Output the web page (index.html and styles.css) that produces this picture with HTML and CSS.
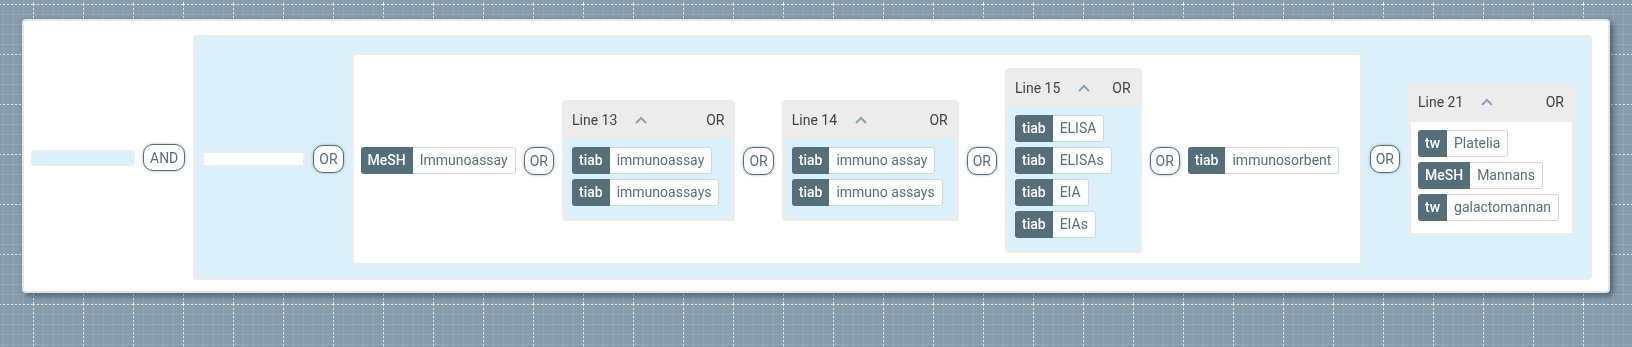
FILE: index.html
```html
<!DOCTYPE html>
<html lang="en">
<head>
    <meta charset="UTF-8">
    <meta name="viewport" content="width=device-width, initial-scale=1.0">
    <title>Search Builder</title>
    <link rel="stylesheet" href="styles.css">
</head>
<body>
    <!-- blueprint grid behind the builder -->
    <svg class="grid-bg" width="100%" height="100%">
        <defs>
            <pattern id="minor" x="3" y="4" width="10" height="10" patternUnits="userSpaceOnUse">
                <path d="M0 0.5 H10 M0.5 0 V10" stroke="rgba(255,255,255,0.1)" stroke-width="1" fill="none"/>
            </pattern>
            <pattern id="major" x="33" y="4" width="50" height="50" patternUnits="userSpaceOnUse">
                <path d="M0 0.5 H50" stroke="rgba(255,255,255,0.7)" stroke-width="1" stroke-dasharray="2 2" fill="none"/>
                <path d="M0.5 0 V50" stroke="rgba(255,255,255,0.7)" stroke-width="1" stroke-dasharray="2 2" fill="none"/>
            </pattern>
        </defs>
        <rect width="100%" height="100%" fill="#889cab"/>
        <rect width="100%" height="100%" fill="url(#minor)"/>
        <rect width="100%" height="100%" fill="url(#major)"/>
    </svg>

    <div class="card">
        <div class="slot slot-blue"></div>
        <button class="op op-and">AND</button>

        <div class="group group-blue">
            <div class="slot slot-white"></div>
            <button class="op">OR</button>

            <div class="group group-white">
                <span class="tag"><b>MeSH</b><span>Immunoassay</span></span>
                <button class="op">OR</button>

                <div class="line">
                    <div class="line-head">
                        <span class="line-title">Line 13</span>
                        <svg class="chevron" width="12" height="8" viewBox="0 0 12 8"><path d="M1 7 L6 2 L11 7"/></svg>
                        <span class="line-op">OR</span>
                    </div>
                    <div class="line-body">
                        <span class="tag"><b>tiab</b><span>immunoassay</span></span>
                        <span class="tag"><b>tiab</b><span>immunoassays</span></span>
                    </div>
                </div>
                <button class="op">OR</button>

                <div class="line">
                    <div class="line-head">
                        <span class="line-title">Line 14</span>
                        <svg class="chevron" width="12" height="8" viewBox="0 0 12 8"><path d="M1 7 L6 2 L11 7"/></svg>
                        <span class="line-op">OR</span>
                    </div>
                    <div class="line-body">
                        <span class="tag"><b>tiab</b><span>immuno assay</span></span>
                        <span class="tag"><b>tiab</b><span>immuno assays</span></span>
                    </div>
                </div>
                <button class="op">OR</button>

                <div class="line">
                    <div class="line-head">
                        <span class="line-title">Line 15</span>
                        <svg class="chevron" width="12" height="8" viewBox="0 0 12 8"><path d="M1 7 L6 2 L11 7"/></svg>
                        <span class="line-op">OR</span>
                    </div>
                    <div class="line-body">
                        <span class="tag"><b>tiab</b><span>ELISA</span></span>
                        <span class="tag"><b>tiab</b><span>ELISAs</span></span>
                        <span class="tag"><b>tiab</b><span>EIA</span></span>
                        <span class="tag"><b>tiab</b><span>EIAs</span></span>
                    </div>
                </div>
                <button class="op">OR</button>

                <span class="tag"><b>tiab</b><span>immunosorbent</span></span>
            </div>

            <button class="op">OR</button>

            <div class="line">
                <div class="line-head">
                    <span class="line-title">Line 21</span>
                    <svg class="chevron" width="12" height="8" viewBox="0 0 12 8"><path d="M1 7 L6 2 L11 7"/></svg>
                    <span class="line-op">OR</span>
                </div>
                <div class="line-body line-body-white">
                    <span class="tag"><b>tw</b><span>Platelia</span></span>
                    <span class="tag"><b>MeSH</b><span>Mannans</span></span>
                    <span class="tag"><b>tw</b><span>galactomannan</span></span>
                </div>
            </div>
        </div>
    </div>
</body>
</html>
```

FILE: styles.css
```css
body {
    font-family: Roboto, "Liberation Sans", sans-serif;
    font-size: 14px;
    margin: 0;
    padding: 19px 22px;
    color: #424242;
}

.grid-bg {
    position: fixed;
    top: 0;
    left: 0;
    z-index: -1;
}

.card {
    display: flex;
    align-items: center;
    gap: 8px;
    background-color: #ffffff;
    border: 2px solid #e6e6e6;
    border-radius: 4px;
    padding: 14px 16px 11px 7px;
    box-shadow: 3px 3px 6px rgba(35, 50, 60, 0.6);
}

.group {
    display: flex;
    align-items: center;
    gap: 8px;
    border: 2px solid #ececec;
    border-radius: 4px;
}

.group-blue {
    flex: 1;
    background-color: #daf1fc;
    padding: 16px 15px 13px 7px;
}

.group-white {
    flex: 1;
    background-color: #ffffff;
    padding: 13px 13px 10px 7px;
}

.slot {
    width: 100px;
    height: 12px;
    border: 2px solid #ececec;
    border-radius: 3px;
}

.slot-blue {
    background-color: #daf1fc;
}

.slot-white {
    width: 99px;
    background-color: #ffffff;
}

.op {
    font-family: inherit;
    font-size: 14px;
    color: #546e7a;
    background-color: #ffffff;
    border: 1px solid #546e7a;
    border-radius: 10px;
    height: 28px;
    padding: 0 5px;
    box-shadow: 0 0 3px rgba(84, 110, 122, 0.55);
    cursor: pointer;
}

.op-and {
    height: 27px;
    padding: 0 6px;
}

.tag {
    display: inline-flex;
    align-self: flex-start;
    height: 27px;
    line-height: 27px;
    white-space: nowrap;
}

.group > .tag {
    align-self: center;
}

.tag b {
    font-weight: 500;
    color: #ffffff;
    background-color: #546e7a;
    padding: 0 7px;
    border-radius: 3px 0 0 3px;
}

.tag span {
    color: #586f7c;
    background-color: #ffffff;
    border: 1px solid #cfd8dc;
    border-left: none;
    line-height: 25px;
    padding: 0 7px;
    border-radius: 0 3px 3px 0;
}

.line {
    background-color: #ececec;
    border-radius: 4px;
    padding: 0 3px 3px;
}

.line-head {
    display: flex;
    align-items: center;
    height: 39px;
    padding: 0 8px 0 7px;
}

.chevron {
    margin-left: 18px;
    margin-right: 22px;
    fill: none;
    stroke: #8ea2af;
    stroke-width: 2;
}

.line-op {
    margin-left: auto;
}

.line-body {
    display: flex;
    flex-direction: column;
    gap: 5px;
    background-color: #daf1fc;
    padding: 8px 13px 12px 7px;
}

.line-body-white {
    background-color: #ffffff;
}
```
